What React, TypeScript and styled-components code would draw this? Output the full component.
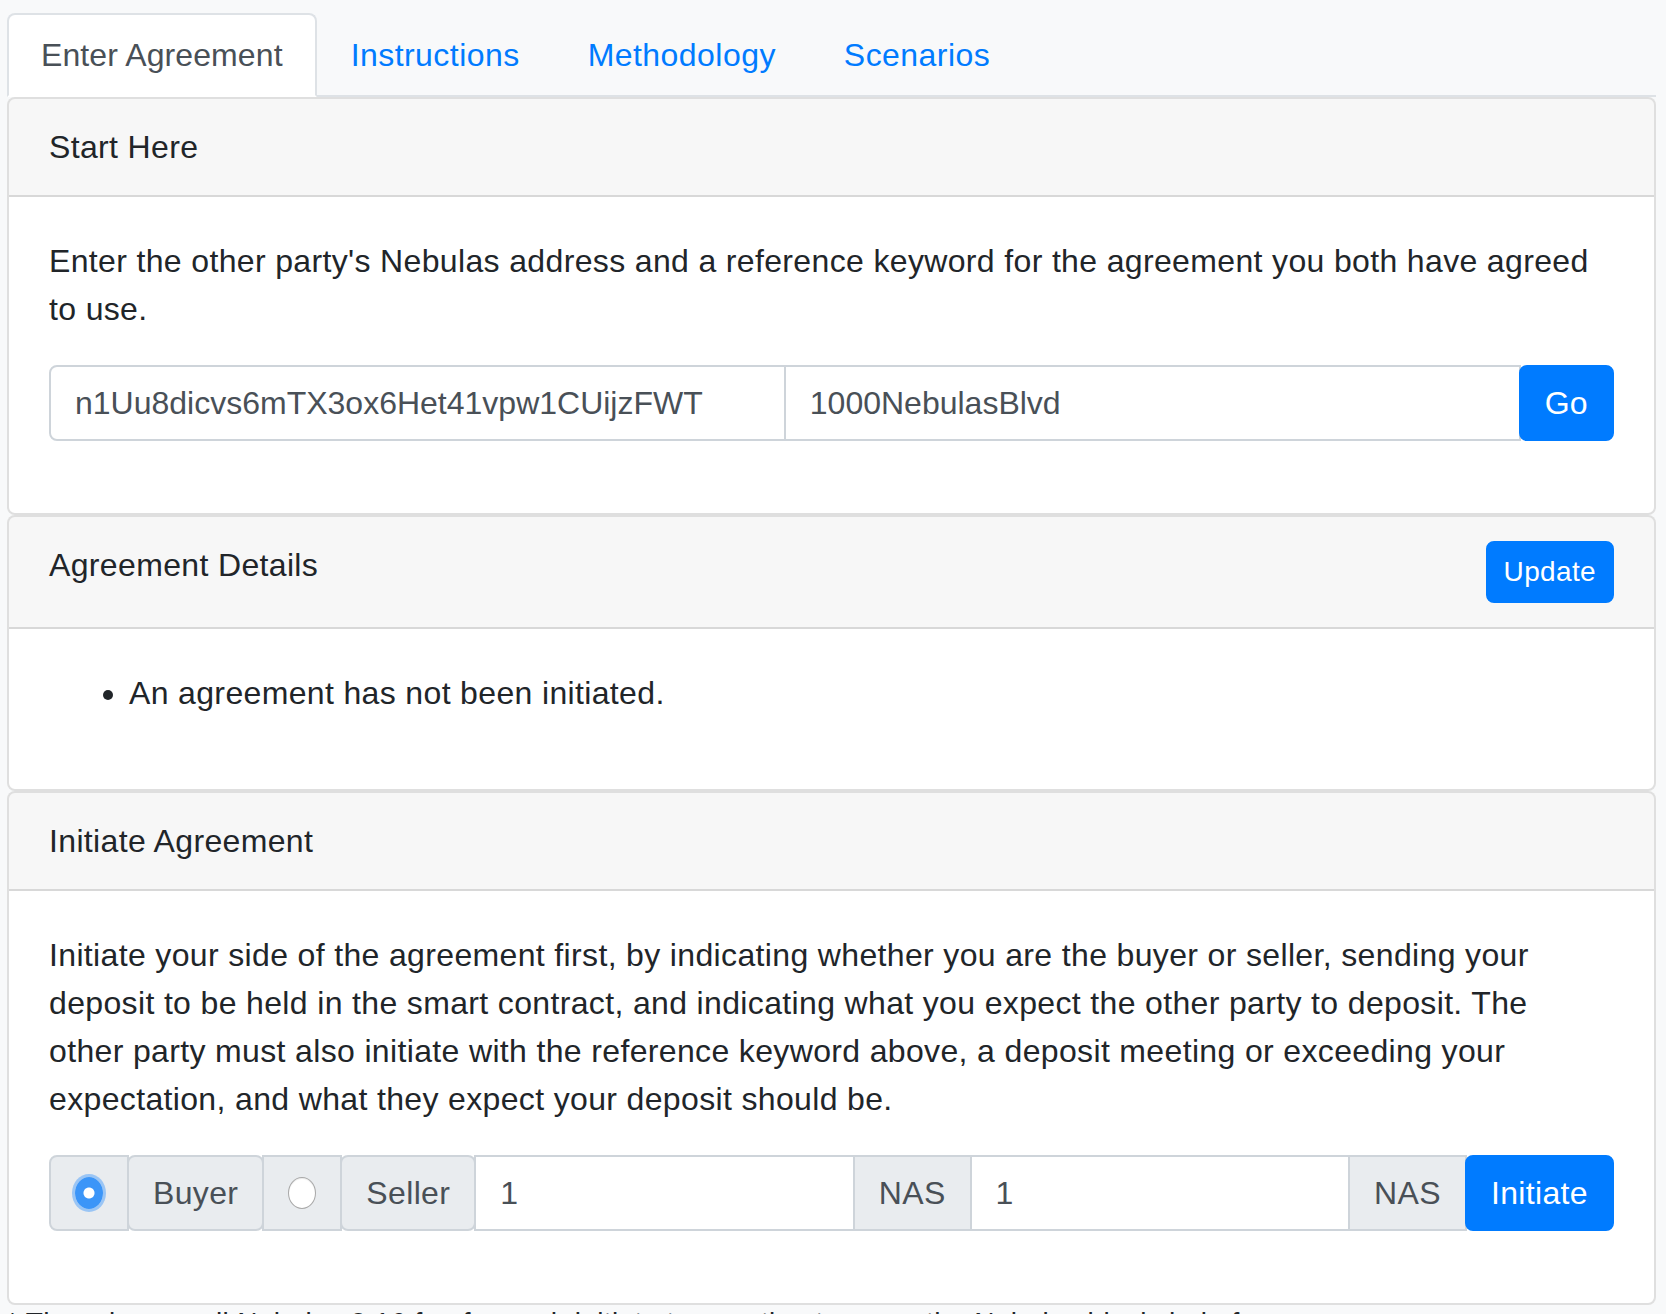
import { useState } from 'react';
import styled, { createGlobalStyle } from 'styled-components';

const GlobalStyle = createGlobalStyle`
  body {
    margin: 0;
    background: #f8f9fa;
    color: #212529;
    font-family: "Liberation Sans", Arial, sans-serif;
    font-size: 32px;
    line-height: 1.5;
    letter-spacing: 0.35px;
  }

  * {
    box-sizing: border-box;
  }
`;

const Page = styled.div`
  padding: 13px 10px 0 7px;
`;

const TabList = styled.ul`
  display: flex;
  margin: 0;
  padding: 0;
  list-style: none;
  border-bottom: 2px solid #dee2e6;
`;

const TabLink = styled.a<{ $active?: boolean }>`
  display: block;
  margin-bottom: -2px;
  padding: 16px 32px;
  border: 2px solid transparent;
  border-top-left-radius: 8px;
  border-top-right-radius: 8px;
  color: ${(p) => (p.$active ? '#495057' : '#007bff')};
  background: ${(p) => (p.$active ? '#fff' : 'transparent')};
  border-color: ${(p) => (p.$active ? '#dee2e6 #dee2e6 #fff' : 'transparent')};
  letter-spacing: ${(p) => (p.$active ? '0.1px' : '0.45px')};
  text-decoration: none;
  cursor: pointer;
`;

const Card = styled.section`
  background: #fff;
  border: 2px solid rgba(0, 0, 0, 0.125);
  border-radius: 8px;
  overflow: hidden;
`;

const CardHeader = styled.div`
  display: flex;
  align-items: flex-start;
  justify-content: space-between;
  padding: 24px 40px;
  background: rgba(0, 0, 0, 0.03);
  border-bottom: 2px solid rgba(0, 0, 0, 0.125);
`;

const CardBody = styled.div`
  padding: 40px;
`;

const Paragraph = styled.p`
  margin: 0 12px 32px 0;
`;

const List = styled.ul`
  margin: 0 0 32px;
  padding-left: 80px;
`;

const InputGroup = styled.div`
  display: flex;
  align-items: stretch;
  height: 76px;
  margin-bottom: 32px;

  & > * + * {
    margin-left: -2px;
  }
`;

const TextInput = styled.input<{ $radius?: string }>`
  flex: 1 1 0;
  min-width: 0;
  padding: 12px 24px;
  border: 2px solid #ced4da;
  border-radius: ${(p) => p.$radius ?? '0'};
  background: #fff;
  color: #495057;
  font: inherit;
  letter-spacing: 0;
  outline: none;
`;

const Addon = styled.label<{ $radius?: string; $width?: string }>`
  display: flex;
  align-items: center;
  justify-content: center;
  flex: 0 0 auto;
  width: ${(p) => p.$width ?? 'auto'};
  padding: 0 24px;
  border: 2px solid #ced4da;
  border-radius: ${(p) => p.$radius ?? '0'};
  background: #e9ecef;
  color: #495057;
  white-space: nowrap;
`;

const Radio = styled.span<{ $checked?: boolean }>`
  display: block;
  width: 32px;
  height: 32px;
  border-radius: 50%;
  cursor: pointer;
  background: ${(p) =>
    p.$checked ? 'radial-gradient(circle, #fff 0 5px, #3b95f8 6px)' : '#fff'};
  border: ${(p) => (p.$checked ? 'none' : '1.5px solid #a8a8a8')};
  box-shadow: ${(p) =>
    p.$checked ? '0 0 0 3px rgba(90, 165, 250, 0.55)' : 'inset 0 1px 1px rgba(0,0,0,0.08)'};
`;

const Button = styled.button<{ $small?: boolean; $radius?: string }>`
  flex: 0 0 auto;
  padding: ${(p) => (p.$small ? '8px 16px' : '0 24px')};
  border: 2px solid #007bff;
  border-radius: ${(p) => p.$radius ?? '8px'};
  background: #007bff;
  color: #fff;
  font-family: inherit;
  font-size: ${(p) => (p.$small ? '28px' : '32px')};
  line-height: 1.5;
  letter-spacing: 0.35px;
  cursor: pointer;
`;

const Note = styled.p`
  margin: 0;
  font-size: 28px;
  line-height: 1.3;
`;

const tabs = ['Enter Agreement', 'Instructions', 'Methodology', 'Scenarios'];

export default function App() {
  const [activeTab, setActiveTab] = useState(0);
  const [role, setRole] = useState<'buyer' | 'seller'>('buyer');

  return (
    <>
      <GlobalStyle />
      <Page>
        <TabList>
          {tabs.map((t, i) => (
            <li key={t}>
              <TabLink $active={i === activeTab} onClick={() => setActiveTab(i)}>
                {t}
              </TabLink>
            </li>
          ))}
        </TabList>

        <Card>
          <CardHeader>Start Here</CardHeader>
          <CardBody>
            <Paragraph>
              Enter the other party's Nebulas address and a reference keyword for the agreement you
              both have agreed to use.
            </Paragraph>
            <InputGroup>
              <TextInput $radius="8px 0 0 8px" defaultValue="n1Uu8dicvs6mTX3ox6Het41vpw1CUijzFWT" />
              <TextInput defaultValue="1000NebulasBlvd" />
              <Button>Go</Button>
            </InputGroup>
          </CardBody>
        </Card>

        <Card>
          <CardHeader>
            Agreement Details
            <Button $small>Update</Button>
          </CardHeader>
          <CardBody>
            <List>
              <li>An agreement has not been initiated.</li>
            </List>
          </CardBody>
        </Card>

        <Card>
          <CardHeader>Initiate Agreement</CardHeader>
          <CardBody>
            <Paragraph>
              Initiate your side of the agreement first, by indicating whether you are the buyer or
              seller, sending your deposit to be held in the smart contract, and indicating what you
              expect the other party to deposit. The other party must also initiate with the
              reference keyword above, a deposit meeting or exceeding your expectation, and what
              they expect your deposit should be.
            </Paragraph>
            <InputGroup>
              <Addon $radius="8px 0 0 8px" $width="80px" onClick={() => setRole('buyer')}>
                <Radio $checked={role === 'buyer'} />
              </Addon>
              <Addon $radius="8px">Buyer</Addon>
              <Addon $width="80px" onClick={() => setRole('seller')}>
                <Radio $checked={role === 'seller'} />
              </Addon>
              <Addon $radius="8px">Seller</Addon>
              <TextInput defaultValue="1" />
              <Addon>NAS</Addon>
              <TextInput defaultValue="1" />
              <Addon>NAS</Addon>
              <Button>Initiate</Button>
            </InputGroup>
          </CardBody>
        </Card>

        <Note>
          * There is a small Nebulas 0.16 fee for each initiate transaction to cover the Nebulas
          blockchain fee.
        </Note>
      </Page>
    </>
  );
}
